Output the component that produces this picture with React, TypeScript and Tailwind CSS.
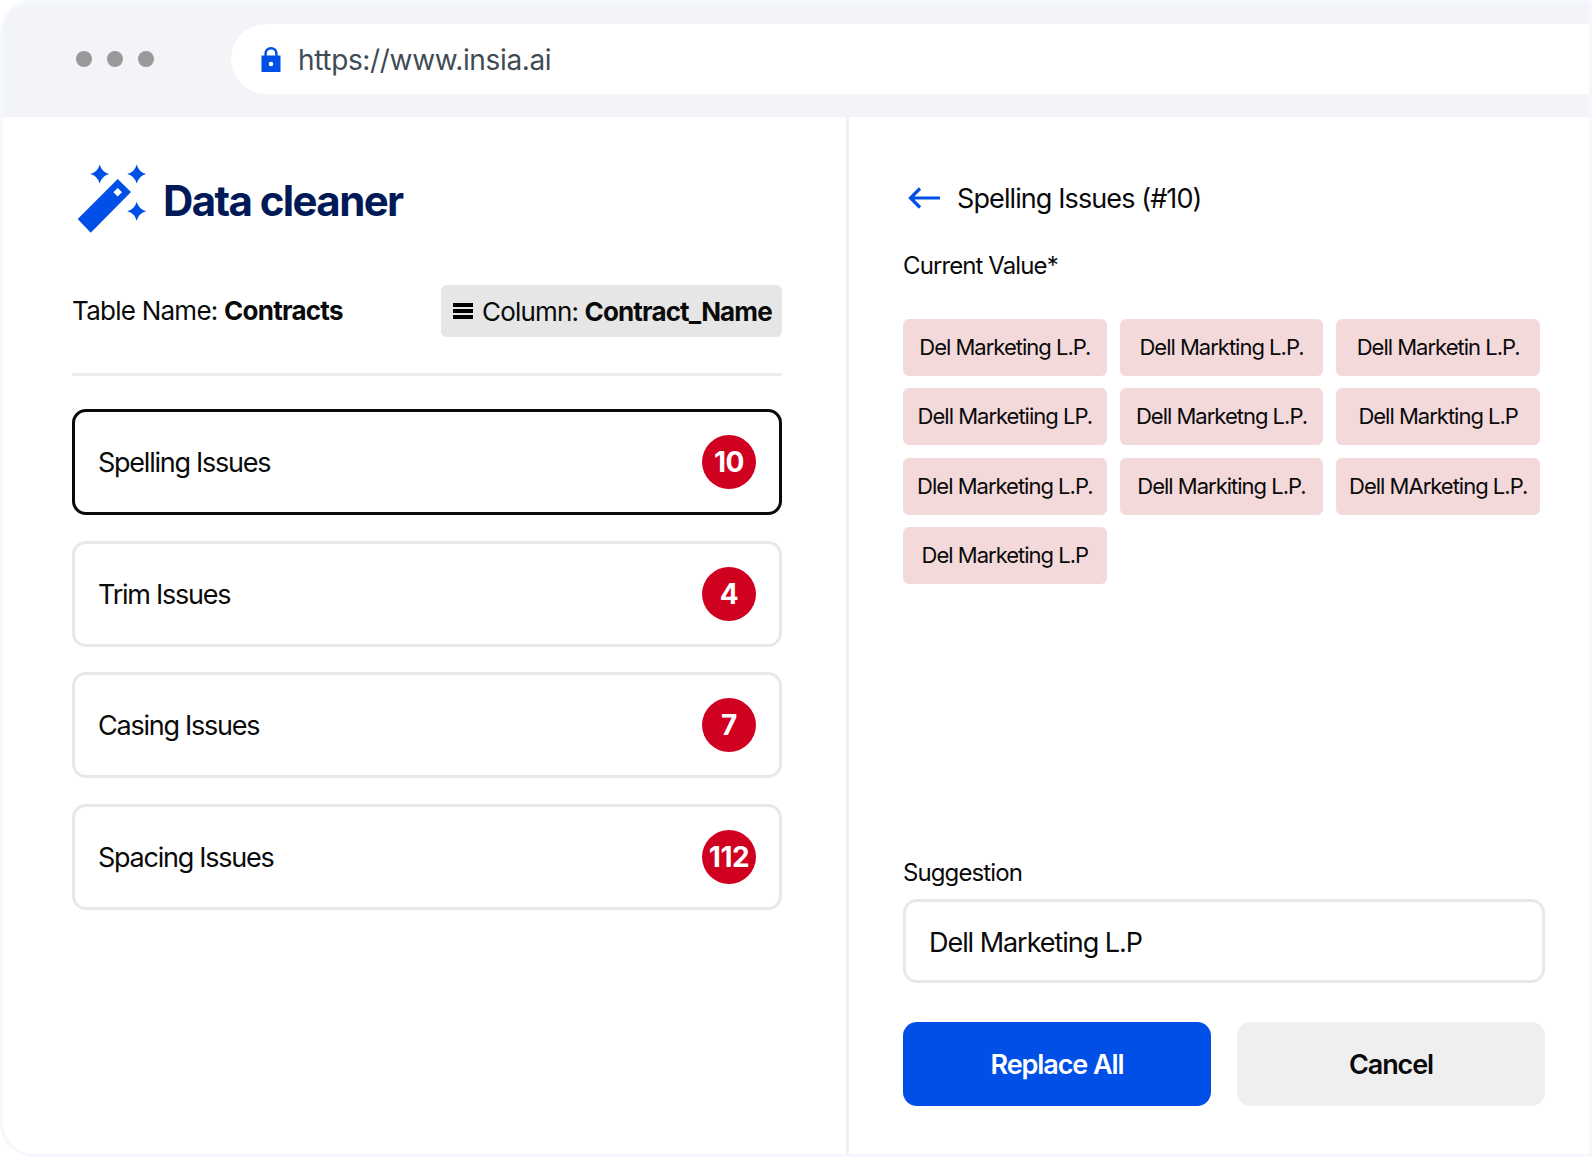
const values = [
  "Del Marketing L.P.",
  "Dell Markting L.P.",
  "Dell Marketin L.P.",
  "Dell Marketiing LP.",
  "Dell Marketng L.P.",
  "Dell Markting L.P",
  "Dlel Marketing L.P.",
  "Dell Markiting L.P.",
  "Dell MArketing L.P.",
  "Del Marketing L.P",
];

const issues = [
  { name: "Spelling Issues", count: 10, active: true },
  { name: "Trim Issues", count: 4, active: false },
  { name: "Casing Issues", count: 7, active: false },
  { name: "Spacing Issues", count: 112, active: false },
];

function star(cx: number, cy: number, r: number) {
  const k = 2;
  return `M${cx} ${cy - r} Q${cx + k} ${cy - k} ${cx + r} ${cy} Q${cx + k} ${cy + k} ${cx} ${cy + r} Q${cx - k} ${cy + k} ${cx - r} ${cy} Q${cx - k} ${cy - k} ${cx} ${cy - r} Z`;
}

function WandIcon() {
  return (
    <svg width="70" height="72" viewBox="0 0 70 72" className="shrink-0 ml-[5px]">
      <path
        fill="#0050e8"
        fillRule="evenodd"
        d="M40.7 16 L54 29 L13.7 69.7 L0.7 56 Z M36.4 29.3 L40.7 25 L45 29.3 L40.7 33.6 Z"
      />
      <path fill="#0050e8" d={star(22.7, 11, 9.5)} />
      <path fill="#0050e8" d={star(59.7, 11, 9.5)} />
      <path fill="#0050e8" d={star(59.7, 48.3, 9.5)} />
    </svg>
  );
}

function LockIcon() {
  return (
    <svg width="20" height="25" viewBox="0 0 20 25" className="shrink-0">
      <path
        fill="none"
        stroke="#0050e8"
        strokeWidth="2.4"
        d="M4.6 10 V6.5 C4.6 3.3 6.9 1.2 10 1.2 C13.1 1.2 15.4 3.3 15.4 6.5 V10"
      />
      <path
        fill="#0050e8"
        fillRule="evenodd"
        d="M0.5 8.5 H19.5 V25 H0.5 Z M10 14.7 A2.3 2.3 0 1 0 10 19.3 A2.3 2.3 0 1 0 10 14.7 Z"
      />
    </svg>
  );
}

function ArrowLeft() {
  return (
    <svg width="33" height="24" viewBox="0 0 33 24" className="shrink-0 ml-[5px] -mt-[2px]">
      <path
        d="M32 12 H2.5 M12 2.5 L2.5 12 L12 21.5"
        fill="none"
        stroke="#0050e8"
        strokeWidth="3.2"
      />
    </svg>
  );
}

export default function App() {
  return (
    <div className="w-[1592px] h-[1157px] bg-white font-['Inter',sans-serif] text-[#0a0a0a] overflow-hidden">
      <div className="h-full flex flex-col rounded-l-[34px] border-[3px] border-[#f4f7fe] overflow-hidden">
        {/* Browser bar */}
        <div className="h-[114px] shrink-0 bg-[#f3f4f8] flex items-center pl-[73px] pb-[2px]">
          <div className="flex gap-[15px] w-[155px] shrink-0">
            <span className="w-[16px] h-[16px] rounded-full bg-[#999999]" />
            <span className="w-[16px] h-[16px] rounded-full bg-[#999999]" />
            <span className="w-[16px] h-[16px] rounded-full bg-[#999999]" />
          </div>
          <div className="flex-1 h-[70px] bg-white rounded-l-[35px] flex items-center pl-[30px] gap-[17px]">
            <LockIcon />
            <span className="text-[28px] text-[#3f4b55] tracking-[-0.35px] pt-[2px]">https://www.insia.ai</span>
          </div>
        </div>

        <div className="flex-1 flex min-h-0">
          {/* Left panel */}
          <div className="w-[846px] shrink-0 border-r-[3px] border-[#eef0f4] pl-[69px] pr-[64px] pt-[46px]">
            <div className="flex items-center gap-[16px] h-[72px]">
              <WandIcon />
              <h1 className="text-[42px] font-bold text-[#001a57] tracking-[-1.6px] mt-[2px]">Data cleaner</h1>
            </div>

            <div className="flex items-center justify-between mt-[49px] h-[53px]">
              <p className="text-[26px] tracking-[-0.75px] -mt-[1px]">
                Table Name: <strong className="font-bold">Contracts</strong>
              </p>
              <div className="w-[341px] h-[52px] bg-[#e6e6e6] rounded-[6px] flex items-center justify-center gap-[9px] pl-[2px] text-[26px] tracking-[-0.85px]">
                <svg width="20" height="16" viewBox="0 0 20 16" className="shrink-0">
                  <path fill="#000" d="M0 0 H20 V4 H0 Z M0 6 H20 V10 H0 Z M0 12 H20 V16 H0 Z" />
                </svg>
                <span className="pt-[2px]">
                  Column: <strong className="font-bold">Contract_Name</strong>
                </span>
              </div>
            </div>

            <div className="h-[3px] bg-[#eeeeee] mt-[36px]" />

            <div className="flex flex-col gap-[25.6px] mt-[33px]">
              {issues.map((issue) => (
                <div
                  key={issue.name}
                  className={`h-[106px] rounded-[14px] border-[3px] flex items-center justify-between pl-[23px] pr-[23px] ${
                    issue.active ? "border-[#0a0a0a]" : "border-[#e8e8e8]"
                  }`}
                >
                  <span className="text-[27px] tracking-[-1.25px] pt-[3px]">{issue.name}</span>
                  <span className="w-[54px] h-[54px] rounded-full bg-[#cf0020] text-white text-[28px] font-bold flex items-center justify-center tracking-[-0.5px]">
                    {issue.count}
                  </span>
                </div>
              ))}
            </div>
          </div>

          {/* Right panel */}
          <div className="flex-1 flex flex-col pl-[54px] pr-[44px] pb-[48px]">
            <div className="flex items-center gap-[16px] mt-[66px] h-[32px]">
              <ArrowLeft />
              <span className="text-[27px] tracking-[-0.9px]">Spelling Issues (#10)</span>
            </div>
            <p className="text-[24px] tracking-[-0.9px] mt-[35px] leading-[32px]">Current Value*</p>
            <div className="grid grid-cols-3 gap-x-[13px] gap-y-[12.5px] mt-[36.5px] w-[637px]">
              {values.map((v) => (
                <div
                  key={v}
                  className="h-[57px] bg-[#f4d9db] rounded-[6px] flex items-center justify-center text-[22px] tracking-[-1px] whitespace-nowrap"
                >
                  {v}
                </div>
              ))}
            </div>

            <div className="mt-auto">
              <p className="text-[24px] tracking-[-0.9px] leading-[32px]">Suggestion</p>
              <div className="h-[84px] mt-[10px] border-[3px] border-[#e8e8e8] rounded-[14px] flex items-center pl-[23px] pt-[4px] text-[27px] tracking-[-1.05px]">
                Dell Marketing L.P
              </div>
              <div className="flex gap-[26px] mt-[39px]">
                <button className="flex-1 h-[84px] rounded-[14px] bg-[#0050e8] text-white text-[27px] font-semibold tracking-[-1.1px] pt-[3px]">
                  Replace All
                </button>
                <button className="flex-1 h-[84px] rounded-[14px] bg-[#efefef] text-[27px] font-semibold tracking-[-1.1px] pt-[3px]">
                  Cancel
                </button>
              </div>
            </div>
          </div>
        </div>
      </div>
    </div>
  );
}
